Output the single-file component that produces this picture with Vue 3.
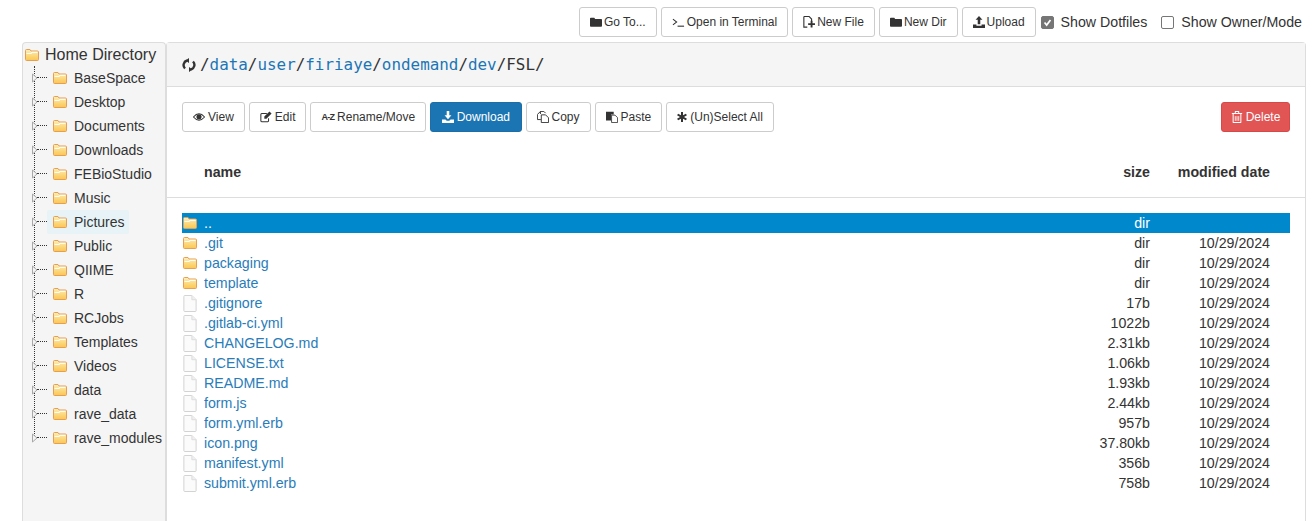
<script setup>
const topButtons = [
  { label: 'Go To...', icon: 'folder' },
  { label: 'Open in Terminal', icon: 'terminal' },
  { label: 'New File', icon: 'newfile' },
  { label: 'New Dir', icon: 'folder' },
  { label: 'Upload', icon: 'upload' },
]
const actions = [
  { label: 'View', icon: 'eye' },
  { label: 'Edit', icon: 'edit' },
  { label: 'Rename/Move', icon: 'az' },
  { label: 'Download', icon: 'download', primary: true },
  { label: 'Copy', icon: 'copy' },
  { label: 'Paste', icon: 'paste' },
  { label: '(Un)Select All', icon: 'asterisk' },
]
const tree = ['BaseSpace','Desktop','Documents','Downloads','FEBioStudio','Music','Pictures','Public','QIIME','R','RCJobs','Templates','Videos','data','rave_data','rave_modules']
const segments = ['data','user','firiaye','ondemand','dev']
const files = [
  { name: '..', size: 'dir', date: '', dir: true, selected: true },
  { name: '.git', size: 'dir', date: '10/29/2024', dir: true },
  { name: 'packaging', size: 'dir', date: '10/29/2024', dir: true },
  { name: 'template', size: 'dir', date: '10/29/2024', dir: true },
  { name: '.gitignore', size: '17b', date: '10/29/2024' },
  { name: '.gitlab-ci.yml', size: '1022b', date: '10/29/2024' },
  { name: 'CHANGELOG.md', size: '2.31kb', date: '10/29/2024' },
  { name: 'LICENSE.txt', size: '1.06kb', date: '10/29/2024' },
  { name: 'README.md', size: '1.93kb', date: '10/29/2024' },
  { name: 'form.js', size: '2.44kb', date: '10/29/2024' },
  { name: 'form.yml.erb', size: '957b', date: '10/29/2024' },
  { name: 'icon.png', size: '37.80kb', date: '10/29/2024' },
  { name: 'manifest.yml', size: '356b', date: '10/29/2024' },
  { name: 'submit.yml.erb', size: '758b', date: '10/29/2024' },
]
</script>

<template>
  <div class="page">
    <svg width="0" height="0" class="defs">
      <defs>
        <linearGradient id="fg" x1="0" y1="0" x2="0" y2="1">
          <stop offset="0" stop-color="#fdeeb8" />
          <stop offset="1" stop-color="#fbc650" />
        </linearGradient>
        <symbol id="yfolder" viewBox="0 0 14 12">
          <path d="M.5 1.500q0-1 1-1h3.500l1 1.500h6.500q1 0 1 1v7.500q0 1-1 1h-11q-1 0-1-1z" fill="url(#fg)" stroke="#e59f55" />
          <path d="M1.500 4.500h4.500l1-1.200h5.500" fill="none" stroke="#fffdf0" stroke-width="1.200" />
        </symbol>
        <symbol id="doc" viewBox="0 0 14 18">
          <path d="M.5 1.500q0-1 1-1h7.500l4.500 4.500v11.500q0 1-1 1h-11q-1 0-1-1z" fill="#fbfbfb" stroke="#d0d0d0" />
          <path d="M9 .5v4.500h4.500" fill="#f0f0f0" stroke="#dcdcdc" />
        </symbol>
      </defs>
    </svg>

    <div class="topbar">
      <button v-for="b in topButtons" :key="b.label" class="btn top-btn">
        <svg v-if="b.icon === 'folder'" class="ico" viewBox="0 0 14 12"><path d="M0 2q0-1 1-1h4l1 1.500h7q1 0 1 1v7q0 1-1 1h-12q-1 0-1-1z" fill="#333" /></svg>
        <svg v-else-if="b.icon === 'terminal'" class="ico wide" viewBox="0 0 14 12"><path d="M1 3l4 3-4 3" fill="none" stroke="#333" stroke-width="1.100" /><path d="M6 10.500h7" stroke="#333" stroke-width="1.200" /></svg>
        <svg v-else-if="b.icon === 'newfile'" class="ico" viewBox="0 0 14 14"><path d="M1 .5h6l3 3v3M5 13h-4v-12.500" fill="none" stroke="#333" stroke-width="1.300" /><path d="M6 9.500h8M10 5.500v8" stroke="#333" stroke-width="2.200" /></svg>
        <svg v-else class="ico" viewBox="0 0 14 14"><path d="M7 0l4 4.500h-2.500v5h-3v-5h-2.500z" fill="#333" /><path d="M0 10h4v1.500h6v-1.500h4v4h-14z" fill="#333" /></svg>
        {{ b.label }}
      </button>
      <label class="check"><span class="box on"><svg viewBox="0 0 13 13"><path d="M3 6.500l2.500 3 4.500-6" fill="none" stroke="#fff" stroke-width="2" /></svg></span>Show Dotfiles</label>
      <label class="check second"><span class="box"></span>Show Owner/Mode</label>
    </div>

    <div class="main">
      <aside class="sidebar">
        <div class="tree-root">
          <svg class="tree-folder root-folder"><use href="#yfolder" /></svg>
          Home Directory
        </div>
        <ul class="tree">
          <li v-for="t in tree" :key="t" class="tree-item">
            <svg class="arrow" viewBox="0 0 6 10"><path d="M.5 1l4.500 4-4.500 4z" fill="#f5f5f5" stroke="#a8a8a8" /></svg>
            <span class="dash"></span>
            <span class="tree-node" :class="{ hover: t === 'Pictures' }">
              <svg class="tree-folder"><use href="#yfolder" /></svg>
              <span class="tree-label">{{ t }}</span>
            </span>
          </li>
        </ul>
      </aside>

      <section class="panel">
        <div class="path-bar">
          <svg class="refresh" viewBox="0 0 14 14"><path d="M5 2.500a4.800 4.800 0 0 0-2 8M9 11.500a4.800 4.800 0 0 0 2-8" fill="none" stroke="#333" stroke-width="2.400" /><path d="M7 0v5l-3.500-2.500zM7 14v-5l3.500 2.500z" fill="#333" /></svg>
          <span class="path"><span class="sep">/</span><template v-for="s in segments" :key="s"><a>{{ s }}</a><span class="sep">/</span></template><span class="sep">FSL/</span></span>
        </div>

        <div class="actions">
          <div class="action-group">
            <button v-for="a in actions" :key="a.label" class="btn" :class="{ primary: a.primary }">
              <svg v-if="a.icon === 'eye'" class="ico" viewBox="0 0 14 10"><path d="M.5 5q6.500-7.500 13 0q-6.500 7.500-13 0z" fill="none" stroke="#333" stroke-width="1.200" /><circle cx="7" cy="4.800" r="3" fill="#333" /></svg>
              <svg v-else-if="a.icon === 'edit'" class="ico" viewBox="0 0 14 13"><path d="M10 8v3q0 1-1 1h-7q-1 0-1-1v-7.500q0-1 1-1h6" fill="none" stroke="#333" stroke-width="1.200" /><path d="M5 6l6-6 2.500 2.500-6 6h-2.500z" fill="#333" /></svg>
              <span v-else-if="a.icon === 'az'" class="az">A-Z</span>
              <svg v-else-if="a.icon === 'download'" class="ico" viewBox="0 0 14 14"><path d="M5.500 0h3v5h2.500l-4 4.500-4-4.500h2.500z" fill="#fff" /><path d="M0 10h4l1.500 1.500h3l1.500-1.500h4v4h-14z" fill="#fff" /></svg>
              <svg v-else-if="a.icon === 'copy'" class="ico" viewBox="0 0 14 14"><path d="M4 3.500v-3h4l2 2M4 .5l-3.500 3.500v6h4" fill="none" stroke="#333" stroke-width="1.100" /><path d="M5 4.500h5l3.500 3.500v5.500h-8.500z" fill="#fff" stroke="#333" stroke-width="1.100" /></svg>
              <svg v-else-if="a.icon === 'paste'" class="ico" viewBox="0 0 14 14"><path d="M0 1h9v3h-3v7h-6z" fill="#333" /><path d="M6.500 4.800h4l3 3v5.700h-7z" fill="#fff" stroke="#333" /></svg>
              <svg v-else class="ico small" viewBox="0 0 12 12"><path d="M4.800 0h2.400v4l3.500-2 1.200 2-3.500 2 3.500 2-1.200 2-3.500-2v4h-2.400v-4l-3.500 2-1.200-2 3.500-2-3.500-2 1.200-2 3.500 2z" fill="#333" /></svg>
              {{ a.label }}
            </button>
          </div>
          <button class="btn danger">
            <svg class="ico" viewBox="0 0 12 14"><path d="M0 3h12M1.500 3v10q0 .5.5.5h8q.5 0 .5-.5v-10M4 3v-2q0-.5.5-.5h3q.5 0 .5.5v2" fill="none" stroke="#fff" stroke-width="1.200" /><path d="M4 6v5.500M6 6v5.500M8 6v5.500" stroke="#fff" /></svg>
            Delete
          </button>
        </div>

        <div class="thead">
          <div class="cell-name">name</div>
          <div class="cell-size">size</div>
          <div class="cell-date">modified date</div>
        </div>

        <div class="rows">
          <div v-for="f in files" :key="f.name" class="row" :class="{ selected: f.selected }">
            <svg class="row-icon" :class="{ isdoc: !f.dir }"><use :href="f.dir ? '#yfolder' : '#doc'" /></svg>
            <a class="cell-name">{{ f.name }}</a>
            <div class="cell-size">{{ f.size }}</div>
            <div class="cell-date">{{ f.date }}</div>
          </div>
        </div>
      </section>
    </div>
  </div>
</template>

<style>
html, body { margin: 0; background: #fff; overflow: hidden; }
</style>

<style scoped>
.page {
  height: 521px;
  overflow: hidden;
  display: flex;
  flex-direction: column;
  font-family: "Liberation Sans", Arial, sans-serif;
  font-size: 14.2px;
  color: #333;
}
.defs { position: absolute; }
.topbar {
  display: flex;
  align-items: center;
  justify-content: flex-end;
  height: 30px;
  padding: 7px 12px 5px 0;
  flex: none;
}
.btn {
  display: inline-flex;
  align-items: center;
  justify-content: center;
  gap: 3px;
  height: 30px;
  padding: 0 10px;
  border: 1px solid #ccc;
  border-radius: 3px;
  background: #fff;
  color: #333;
  font: 12px "Liberation Sans", Arial, sans-serif;
  white-space: nowrap;
  box-sizing: border-box;
}
.top-btn { margin-right: 4px; gap: 2px; }
.top-btn:nth-child(5) { margin-right: 5px; }
.ico { width: 12px; height: 12px; flex: none; }
.ico.wide { width: 13px; }
.ico.small { width: 10px; height: 10px; }
.az { font-size: 9px; font-weight: bold; letter-spacing: -0.8px; }
.check {
  display: inline-flex;
  align-items: center;
  font-size: 14.2px;
  line-height: 20px;
  color: #333;
}
.second { margin-left: 14px; }
.box {
  width: 13px;
  height: 13px;
  border: 1px solid #767676;
  border-radius: 2px;
  background: #fff;
  margin-right: 7px;
  box-sizing: border-box;
  display: inline-block;
}
.box.on { background: #767676; }
.box svg { display: block; width: 11px; height: 11px; }

.main {
  display: flex;
  flex: 1;
  min-height: 0;
  margin-left: 22px;
  margin-right: 8px;
}
.sidebar {
  width: 144px;
  box-sizing: border-box;
  background: #f5f5f5;
  border: 1px solid #ddd;
  border-bottom: 0;
  border-radius: 4px 4px 0 0;
  padding-top: 1px;
  flex: none;
}
.tree-root {
  display: flex;
  align-items: center;
  height: 21px;
  margin-bottom: 1px;
  font-size: 16px;
  line-height: 20px;
  white-space: nowrap;
  padding-left: 2px;
}
.root-folder { margin-right: 6px; }
.tree-folder { width: 14px; height: 12px; flex: none; }
.tree {
  list-style: none;
  margin: 0;
  padding: 0 0 0 9px;
  position: relative;
  font-size: 14px;
}
.tree::before {
  content: "";
  position: absolute;
  left: 11px;
  top: 0;
  bottom: 10px;
  border-left: 1px dotted #333;
}
.tree-item {
  display: flex;
  align-items: center;
  height: 24px;
}
.arrow { width: 6px; height: 10px; flex: none; position: relative; z-index: 1; }
.dash { width: 10px; border-top: 1px dotted #333; margin: 0 0 2px -1px; flex: none; }
.tree-node {
  display: flex;
  align-items: center;
  gap: 7px;
  padding: 2px 4px 2px 6px;
  white-space: nowrap;
  border-radius: 2px;
  margin-right: -8px;
  line-height: 20px;
}
.tree-node.hover { background: #e7f3f7; }

.panel {
  flex: 1;
  min-width: 0;
  display: flex;
  flex-direction: column;
  box-sizing: border-box;
  border-top: 1px solid #ddd;
  border-left: 1px solid #ddd;
  border-right: 1px solid #ddd;
  border-radius: 4px 4px 0 0;
}
.path-bar {
  height: 44px;
  box-sizing: border-box;
  flex: none;
  background: #f5f5f5;
  border-bottom: 1px solid #ddd;
  display: flex;
  align-items: center;
  padding-left: 15px;
}
.refresh { width: 14px; height: 14px; margin-right: 4px; flex: none; }
.path {
  font-family: "DejaVu Sans Mono", monospace;
  font-size: 15.9px;
  white-space: pre;
}
.path a { color: #1c75b5; }
.sep { color: #333; }
.actions {
  display: flex;
  justify-content: space-between;
  align-items: center;
  padding: 15px 15px 0;
  flex: none;
}
.action-group { display: flex; gap: 4px; }
.primary { background: #1b75b3; border-color: #1b6ea8; color: #fff; padding: 0 10.5px; }
.danger { background: #e25555; border-color: #d94848; color: #fff; width: 69px; }
.thead {
  display: flex;
  align-items: center;
  height: 66px;
  box-sizing: border-box;
  border-bottom: 1px solid #ddd;
  padding: 32px 35px 17px 37px;
  font-weight: bold;
  flex: none;
}
.thead .cell-name { flex: 1; }
.thead .cell-size { width: 60px; text-align: right; }
.thead .cell-date { width: 120px; text-align: right; }
.rows { padding: 15px 15px 0; }
.row {
  display: flex;
  align-items: center;
  height: 20px;
  line-height: 20px;
  padding-right: 20px;
}
.row-icon { width: 14px; height: 12px; margin-left: 1px; margin-right: 7px; flex: none; }
.row-icon.isdoc { width: 14px; height: 17px; }
.row .cell-name { flex: 1; color: #2a7cb9; }
.row .cell-size { width: 60px; text-align: right; }
.row .cell-date { width: 120px; text-align: right; }
.row.selected { background: #0088cc; color: #fff; }
.row.selected .cell-name { color: #fff; }
</style>
